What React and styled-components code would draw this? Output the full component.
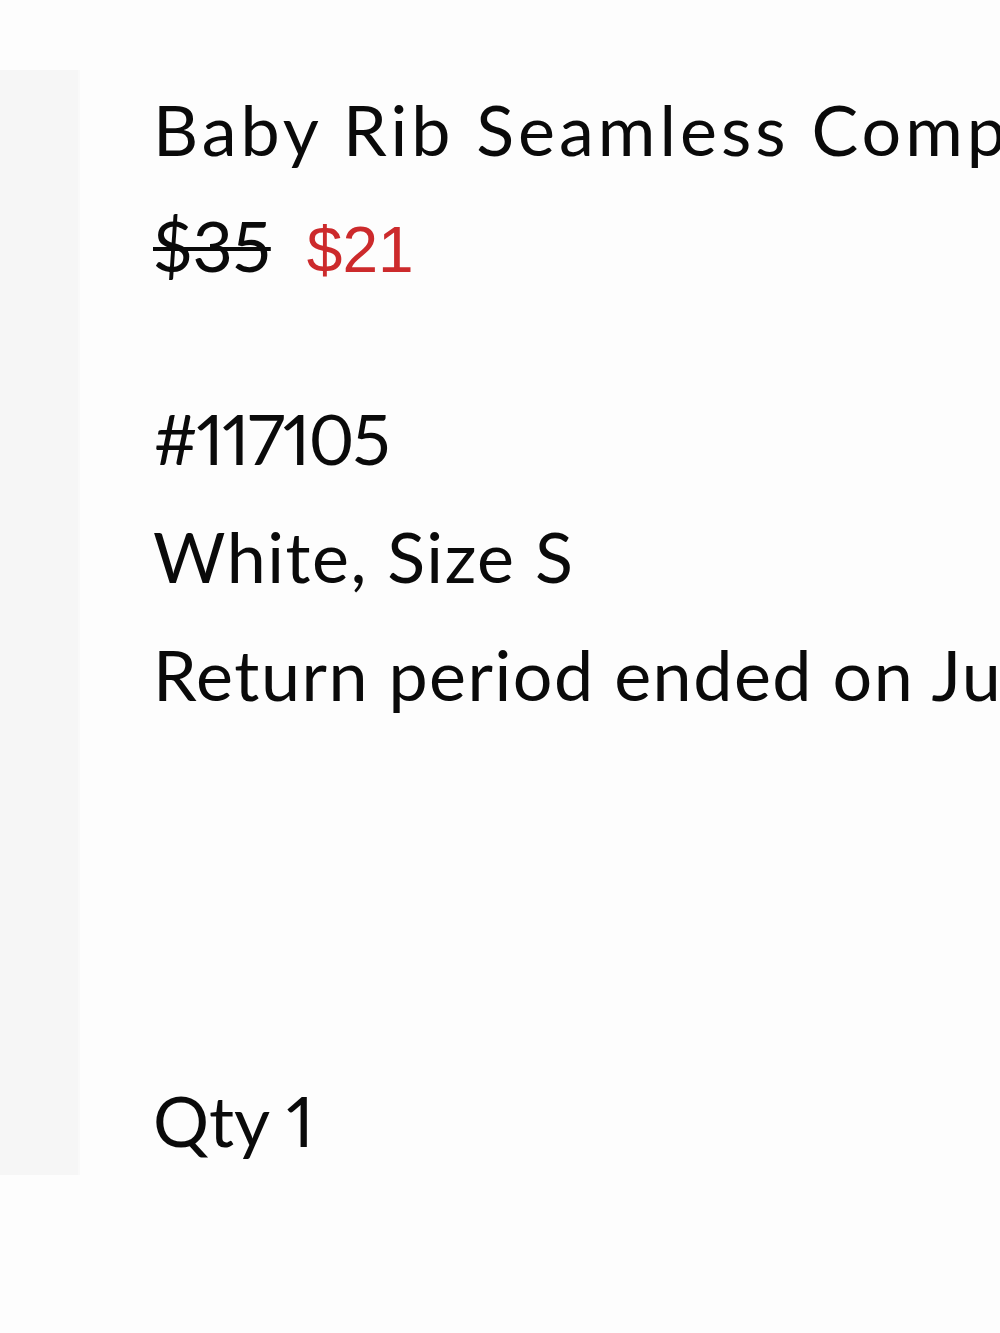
import React from 'react'
import styled, { createGlobalStyle } from 'styled-components'

const GlobalStyle = createGlobalStyle`
    html, body {
        margin: 0;
        padding: 0;
        background: #fdfdfd;
    }
    body {
        width: 1000px;
        height: 1333px;
        overflow: hidden;
    }
`

const item = {
    title: 'Baby Rib Seamless Compression Tank',
    was: '$35',
    now: '$21',
    sku: '#117105',
    variant: 'White, Size S',
    returnNote: 'Return period ended on June 30, 2023',
    qty: 1,
}

const App = () => {
    return (
        <>
            <GlobalStyle />
            <Page>
                <OrderItem>
                    <Thumb />
                    <Details>
                        <Title>{item.title}</Title>
                        <Prices>
                            <OldPrice>{item.was}</OldPrice>
                            <SalePrice>{item.now}</SalePrice>
                        </Prices>
                        <Meta $first $tight>{item.sku}</Meta>
                        <Meta>{item.variant}</Meta>
                        <Meta>{item.returnNote}</Meta>
                        <Qty>Qty {item.qty}</Qty>
                    </Details>
                </OrderItem>
            </Page>
        </>
    )
}

export default App

const Page = styled.main`
    width: 1000px;
    height: 1333px;
    padding-top: 70px;
    box-sizing: border-box;
    overflow: hidden;
    font-family: Lato, "Liberation Sans", sans-serif;
    color: #0a0a0a;
`

const OrderItem = styled.section`
    display: flex;
    height: 1105px;
`

const Thumb = styled.div`
    flex: 0 0 78px;
    background: #f6f6f6;
    border-right: 2px solid #f9f9f9;
`

const Details = styled.div`
    display: flex;
    flex-direction: column;
    padding-left: 73px;
    white-space: nowrap;
    font-size: 70px;
    font-variant-numeric: proportional-nums;
`

const Title = styled.div`
    line-height: 90px;
    margin-top: 14px;
    letter-spacing: 4px;
`

const Prices = styled.div`
    display: flex;
    align-items: baseline;
    gap: 36px;
    line-height: 90px;
    margin-top: 26px;
`

const OldPrice = styled.span`
    text-decoration: line-through;
    text-decoration-thickness: 4px;
`

const SalePrice = styled.span`
    font-family: "Liberation Sans", Arial, sans-serif;
    font-size: 64px;
    color: #cc2a2c;
`

const Meta = styled.div`
    line-height: 118px;
    margin-top: ${p => (p.$first ? '84px' : '0')};
    letter-spacing: ${p => (p.$tight ? '-2px' : '1.5px')};
`

const Qty = styled.div`
    margin-top: auto;
    margin-bottom: 10px;
    line-height: 90px;
`
